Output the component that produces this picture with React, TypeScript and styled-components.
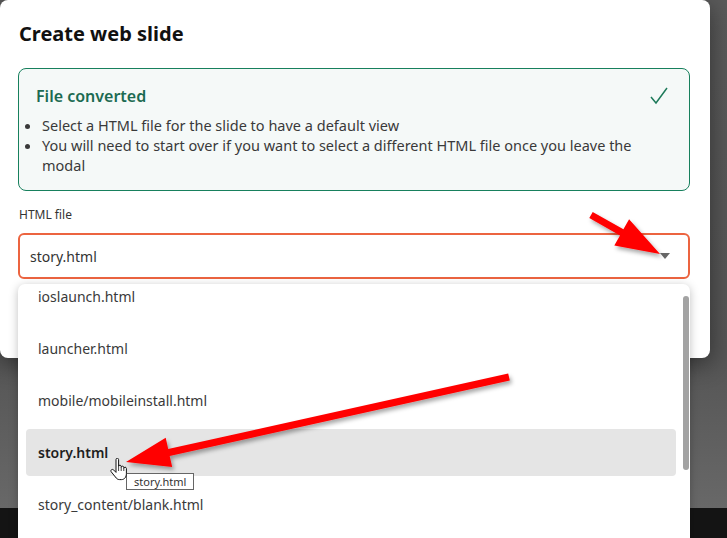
import * as React from "react";
import styled, { createGlobalStyle } from "styled-components";

const items = [
  "ioslaunch.html",
  "launcher.html",
  "mobile/mobileinstall.html",
  "story.html",
  "story_content/blank.html",
];

type Pt = [number, number];

// polygon for a fat annotation arrow from tail to tip
function arrowPoints(tail: Pt, tip: Pt, shaft: number, headLen: number, headW: number) {
  const dx = tip[0] - tail[0];
  const dy = tip[1] - tail[1];
  const len = Math.sqrt(dx * dx + dy * dy);
  const ux = dx / len;
  const uy = dy / len;
  const nx = -uy;
  const ny = ux;
  const bx = tip[0] - ux * headLen;
  const by = tip[1] - uy * headLen;
  const p = (x: number, y: number) => `${x.toFixed(1)},${y.toFixed(1)}`;
  return [
    p(tail[0] + nx * shaft / 2, tail[1] + ny * shaft / 2),
    p(bx + nx * shaft / 2, by + ny * shaft / 2),
    p(bx + nx * headW / 2, by + ny * headW / 2),
    p(tip[0], tip[1]),
    p(bx - nx * headW / 2, by - ny * headW / 2),
    p(bx - nx * shaft / 2, by - ny * shaft / 2),
    p(tail[0] - nx * shaft / 2, tail[1] - ny * shaft / 2),
  ].join(" ");
}

export default function App() {
  return (
    <>
      <GlobalStyle />
      <Screen>
        <Stage>
          <Modal>
            <Title>Create web slide</Title>
            <Notice>
              <NoticeHead>
                <NoticeTitle>File converted</NoticeTitle>
                <svg width="18" height="18" viewBox="0 0 18 18">
                  <path d="M1 10 L6 16 L17 1" fill="none" stroke="#1d7a5a" strokeWidth="1.5" />
                </svg>
              </NoticeHead>
              <NoticeList>
                <li>Select a HTML file for the slide to have a default view</li>
                <li>
                  You will need to start over if you want to select a different HTML file once you leave the
                  modal
                </li>
              </NoticeList>
            </Notice>
            <Label>HTML file</Label>
            <SelectWrap>
              <SelectBox>
                <span>story.html</span>
                <svg width="10" height="6" viewBox="0 0 10 6">
                  <path d="M0 0 H10 L5 6 Z" fill="#666" />
                </svg>
              </SelectBox>
              <Dropdown>
                <OptionList>
                  {items.map((name) => (
                    <Option key={name} $active={name === "story.html"}>
                      {name}
                    </Option>
                  ))}
                </OptionList>
                <Scrollbar />
              </Dropdown>
            </SelectWrap>
          </Modal>
        </Stage>
        <Band />
        <Tooltip>story.html</Tooltip>
        <Cursor width="19" height="23" viewBox="0 0 19 23">
          <path
            d="M6 1.6 C6 0.8 6.6 0.2 7.3 0.2 C8 0.2 8.6 0.8 8.6 1.6 V8.4 C8.6 7.7 9.2 7.2 9.9 7.2 C10.6 7.2 11.2 7.7 11.2 8.4 V9.4 C11.2 8.7 11.8 8.2 12.5 8.2 C13.2 8.2 13.8 8.7 13.8 9.4 V10.4 C13.8 9.7 14.4 9.2 15.1 9.2 C15.8 9.2 16.4 9.7 16.4 10.4 V15.5 C16.4 19 14.5 21.6 11.5 21.6 H9.6 C7.6 21.6 6.6 20.6 5.4 19 L1.3 13.9 C0.7 13.2 0.8 12.2 1.5 11.7 C2.2 11.2 3.2 11.4 3.8 12.1 L6 14.4 Z"
            fill="#fff"
            stroke="#111"
            strokeWidth="1"
          />
          <path d="M8.6 8.4 V13 M11.2 9.4 V13 M13.8 10.4 V13" stroke="#111" strokeWidth="0.8" />
        </Cursor>
        <Arrows width="727" height="538" viewBox="0 0 727 538">
          <defs>
            <filter id="sh" x="-10%" y="-10%" width="130%" height="130%">
              <feDropShadow dx="2" dy="3" stdDeviation="2" floodColor="#000" floodOpacity="0.35" />
            </filter>
          </defs>
          <polygon points={arrowPoints([591, 215], [660, 254], 7, 44, 30)} fill="#ff0000" filter="url(#sh)" />
          <polygon points={arrowPoints([509, 377], [126, 462], 7, 44, 30)} fill="#ff0000" filter="url(#sh)" />
        </Arrows>
      </Screen>
    </>
  );
}

const GlobalStyle = createGlobalStyle`
  html, body {
    margin: 0;
    padding: 0;
    background: #5b5b5b;
  }
  body {
    font-family: "Noto Sans", "Open Sans", sans-serif;
    color: #333;
  }
`;

const Screen = styled.div`
  position: relative;
  width: 727px;
  height: 538px;
  overflow: hidden;
  display: flex;
  flex-direction: column;
`;

const Stage = styled.div`
  height: 508px;
  background: linear-gradient(180deg, #5a5a5a 0%, #555 70%, #686868 100%);
`;

const Band = styled.div`
  flex: 1;
  background: #141414;
`;

const Modal = styled.div`
  width: 710px;
  height: 358px;
  box-sizing: border-box;
  padding: 21px 20px 0 18px;
  background: #fff;
  border-radius: 8px;
  box-shadow: 0 6px 24px rgba(0, 0, 0, 0.45);
  display: flex;
  flex-direction: column;
`;

const Title = styled.h2`
  margin: 0 0 21px 1px;
  font-size: 20px;
  line-height: 26px;
  font-weight: 700;
  color: #111;
`;

const Notice = styled.div`
  border: 1px solid #17805d;
  border-radius: 8px;
  background: #f5f9f8;
  padding: 16px 20px 15px 17px;
`;

const NoticeHead = styled.div`
  display: flex;
  align-items: center;
  justify-content: space-between;
  margin-bottom: 8px;

  svg {
    margin-right: 1px;
  }
`;

const NoticeTitle = styled.div`
  font-size: 16px;
  line-height: 22px;
  font-weight: 600;
  color: #1c6b52;
`;

const NoticeList = styled.ul`
  margin: 0;
  padding-left: 6px;
  font-size: 14.5px;
  line-height: 20px;
  color: #3a3a3a;
`;

const Label = styled.div`
  margin: 16px 0 10px 1px;
  font-size: 12px;
  line-height: 16px;
  color: #333;
`;

const SelectWrap = styled.div`
  position: relative;
`;

const SelectBox = styled.div`
  height: 46px;
  box-sizing: border-box;
  border: 2px solid #ec6440;
  border-radius: 6px;
  padding: 0 18px 0 10px;
  display: flex;
  align-items: center;
  justify-content: space-between;
  font-size: 14px;
  color: #333;
`;

const Dropdown = styled.div`
  position: absolute;
  top: 51px;
  left: 0;
  right: 0;
  height: 300px;
  overflow: hidden;
  background: #fff;
  border-radius: 7px;
  box-shadow: 0 2px 10px rgba(0, 0, 0, 0.25);
  padding: 6px 14px 0 8px;
  box-sizing: border-box;
`;

const OptionList = styled.div`
  margin-top: -17px;
  display: flex;
  flex-direction: column;
  gap: 5px;
`;

const Option = styled.div<{ $active?: boolean }>`
  height: 47px;
  display: flex;
  align-items: center;
  padding-left: 12px;
  border-radius: 4px;
  font-size: 14px;
  color: ${(p) => (p.$active ? "#1e1e1e" : "#3a3a3a")};
  font-weight: ${(p) => (p.$active ? 600 : 400)};
  background: ${(p) => (p.$active ? "#e5e5e5" : "transparent")};
`;

const Scrollbar = styled.div`
  position: absolute;
  top: 12px;
  right: 1px;
  width: 6px;
  height: 174px;
  border-radius: 3px;
  background: #a3a3a3;
`;

const Tooltip = styled.div`
  position: absolute;
  left: 126px;
  top: 473px;
  height: 17px;
  box-sizing: border-box;
  padding: 0 7px;
  border: 1px solid #666;
  background: #fff;
  font-size: 11px;
  line-height: 15px;
  color: #333;
`;

const Cursor = styled.svg`
  position: absolute;
  left: 110px;
  top: 458px;
`;

const Arrows = styled.svg`
  position: absolute;
  left: 0;
  top: 0;
  pointer-events: none;
`;
